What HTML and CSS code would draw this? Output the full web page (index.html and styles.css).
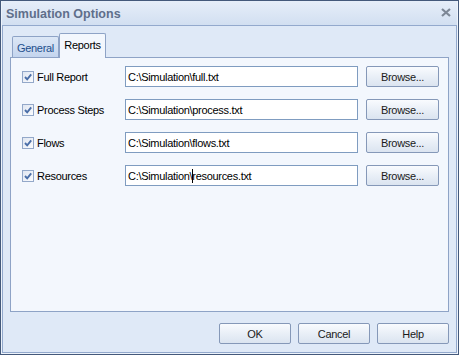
FILE: index.html
```html
<!DOCTYPE html>
<html>
<head>
<meta charset="utf-8">
<link rel="stylesheet" href="styles.css">
</head>
<body>
<div class="window">
  <div class="titlebar">
    <span class="title">Simulation Options</span>
    <svg class="close" width="10" height="9" viewBox="0 0 10 9"><path d="M1 1 L9 8 M9 1 L1 8" stroke="#7d8796" stroke-width="2.2" fill="none"/></svg>
  </div>
  <div class="frame">
    <div class="tabs">
      <div class="tab">General</div>
      <div class="tab active">Reports</div>
    </div>
    <div class="panel">
      <div class="row">
        <div class="check"><span class="box"><svg width="10" height="10" viewBox="0 0 10 10"><path d="M2 5 L4.2 7.4 L8.2 2.4" stroke="#4a6ea8" stroke-width="1.9" fill="none"/></svg></span><span>Full Report</span></div>
        <div class="input">C:\Simulation\full.txt</div>
        <div class="btn browse">Browse...</div>
      </div>
      <div class="row">
        <div class="check"><span class="box"><svg width="10" height="10" viewBox="0 0 10 10"><path d="M2 5 L4.2 7.4 L8.2 2.4" stroke="#4a6ea8" stroke-width="1.9" fill="none"/></svg></span><span>Process Steps</span></div>
        <div class="input">C:\Simulation\process.txt</div>
        <div class="btn browse">Browse...</div>
      </div>
      <div class="row">
        <div class="check"><span class="box"><svg width="10" height="10" viewBox="0 0 10 10"><path d="M2 5 L4.2 7.4 L8.2 2.4" stroke="#4a6ea8" stroke-width="1.9" fill="none"/></svg></span><span>Flows</span></div>
        <div class="input">C:\Simulation\flows.txt</div>
        <div class="btn browse">Browse...</div>
      </div>
      <div class="row">
        <div class="check"><span class="box"><svg width="10" height="10" viewBox="0 0 10 10"><path d="M2 5 L4.2 7.4 L8.2 2.4" stroke="#4a6ea8" stroke-width="1.9" fill="none"/></svg></span><span>Resources</span></div>
        <div class="input">C:\Simulation<span class="ibeam">\</span>resources.txt</div>
        <div class="btn browse">Browse...</div>
      </div>
    </div>
    <div class="footer">
      <div class="btn">OK</div>
      <div class="btn">Cancel</div>
      <div class="btn">Help</div>
    </div>
  </div>
</div>
</body>
</html>
```
FILE: styles.css
```css
html, body {
  margin: 0;
  padding: 0;
}
body {
  font-family: "Liberation Sans", Arial, sans-serif;
  font-size: 11px;
  letter-spacing: -0.3px;
  color: #000;
}
.window {
  width: 459px;
  height: 355px;
  box-sizing: border-box;
  border: 1px solid #44597b;
  padding: 0 1px 1px 1px;
  background: #edf3fb;
  display: flex;
  flex-direction: column;
}
.titlebar {
  height: 24px;
  flex: none;
  display: flex;
  align-items: center;
  justify-content: space-between;
  padding: 0 6px 0 4px;
  background: linear-gradient(#e6eef9, #d2dff1);
}
.title {
  font-weight: bold;
  font-size: 12.5px;
  letter-spacing: 0;
  color: #5f6f8b;
  margin-top: 1px;
}
.close {
  display: block;
  margin-top: -2px;
}
.frame {
  flex: 1;
  border: 1px solid #93a9cd;
  background: #dfe9f7;
  padding: 7px 7px 0 7px;
  display: flex;
  flex-direction: column;
}
.tabs {
  height: 24px;
  display: flex;
  align-items: flex-end;
  padding-left: 2px;
  position: relative;
  z-index: 1;
}
.tab {
  box-sizing: border-box;
  width: 47px;
  height: 21px;
  border: 1px solid #8ea3c6;
  border-bottom: none;
  border-radius: 2px 2px 0 0;
  background: linear-gradient(#dce7f6, #c4d5ee);
  color: #234f8c;
  display: flex;
  align-items: center;
  justify-content: center;
  padding-top: 2px;
}
.tab.active {
  height: 25px;
  margin-bottom: -1px;
  background: #f3f7fd;
  color: #000;
  padding-top: 0;
  padding-bottom: 2px;
}
.panel {
  height: 255px;
  box-sizing: border-box;
  border: 1px solid #8ea3c6;
  background: #f3f7fd;
  padding: 8px 0 0 11px;
  display: flex;
  flex-direction: column;
  gap: 12px;
}
.row {
  height: 21px;
  display: flex;
  align-items: center;
}
.check {
  width: 103px;
  display: flex;
  align-items: center;
  gap: 3px;
  padding-top: 1px;
}
.box {
  width: 12px;
  height: 12px;
  box-sizing: border-box;
  border: 1px solid #93a8c9;
  background: linear-gradient(135deg, #dfe6f1, #fbfcfe);
  display: flex;
  align-items: center;
  justify-content: center;
}
.box svg {
  display: block;
}
.input {
  width: 233px;
  height: 21px;
  box-sizing: border-box;
  border: 1px solid #7f9cc0;
  background: #fff;
  padding: 0 0 0 2px;
  display: flex;
  align-items: center;
}
.ibeam {
  position: relative;
}
.ibeam::after {
  content: "";
  position: absolute;
  left: 2px;
  top: -1px;
  width: 1px;
  height: 14px;
  background: #000;
}
.btn {
  width: 72px;
  height: 21px;
  box-sizing: border-box;
  border: 1px solid #8598b8;
  border-radius: 2px;
  background: linear-gradient(#f9fbfe, #e9eff7 50%, #dbe4f0);
  display: flex;
  align-items: center;
  justify-content: center;
  color: #1a1a1a;
}
.browse {
  width: 73px;
  margin-left: 8px;
}
.footer {
  margin-top: 11px;
  display: flex;
  justify-content: flex-end;
  gap: 7px;
}
```
